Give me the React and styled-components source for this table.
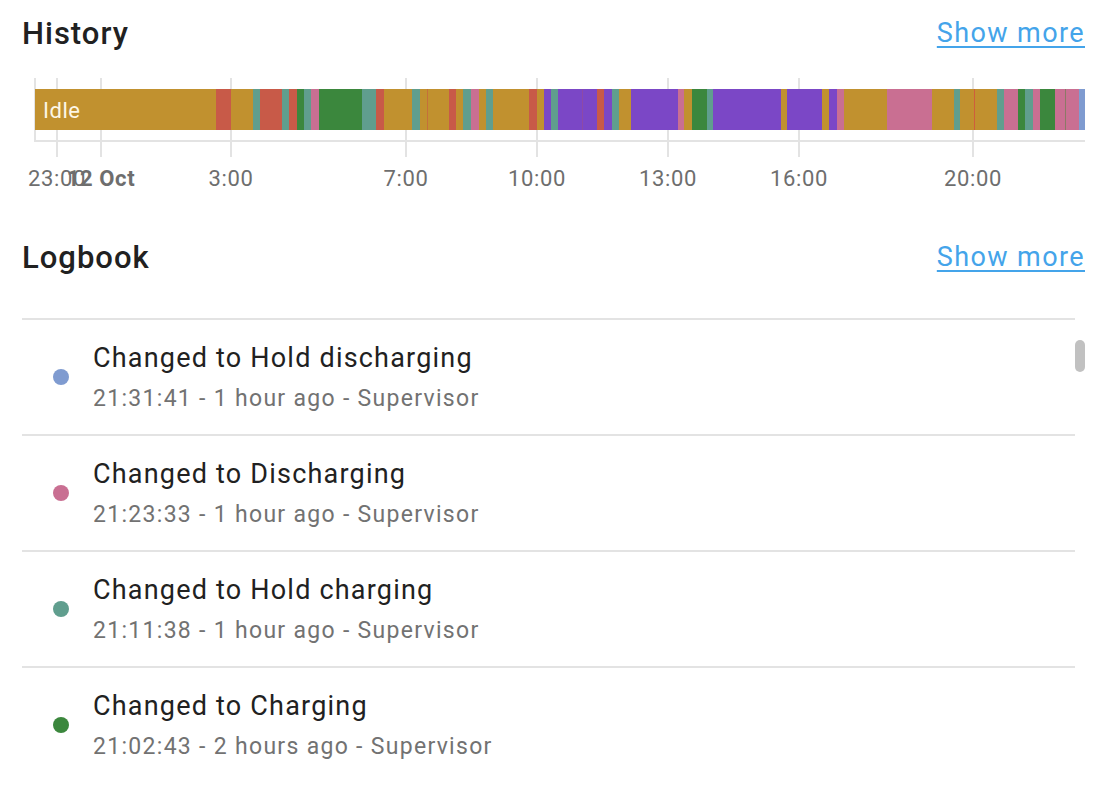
import React from 'react';
import styled, { createGlobalStyle } from 'styled-components';

// paleta dos estados
const colors = {
  gold: '#c1912f',
  red: '#c85a48',
  teal: '#609e8e',
  green: '#3b873d',
  pink: '#c96f92',
  purple: '#7b47c6',
  blue: '#7f9bd0',
  text: '#212121',
  secondary: '#727272',
  divider: '#e3e3e3',
  link: '#44a4ea',
};

const GlobalStyle = createGlobalStyle`
  body {
    margin: 0;
    background: #fff;
    font-family: Roboto, 'Noto Sans', Arial, sans-serif;
    color: ${colors.text};
  }
`;

const Page = styled.div`
  width: 1108px;
  height: 798px;
  overflow: hidden;
  box-sizing: border-box;
  padding: 0 23px 0 22px;
`;

const SectionHeader = styled.div`
  display: flex;
  justify-content: space-between;
  align-items: center;
  height: 66px;
  margin-top: ${(p) => p.$top || 0}px;
`;

const Title = styled.h2`
  margin: 0;
  font-size: 31px;
  font-weight: 500;
  letter-spacing: 1px;
`;

const ShowMore = styled.a`
  font-size: 27px;
  color: ${colors.link};
  text-decoration: underline;
  text-underline-offset: 4px;
  letter-spacing: 1.4px;
  cursor: pointer;
`;

const Chart = styled.svg`
  display: block;
  margin-top: 4px;
`;

const List = styled.div`
  position: relative;
  margin-top: 28px;
  padding-right: 10px;
`;

const Item = styled.div`
  display: flex;
  align-items: center;
  gap: 24px;
  height: 114px;
  padding-left: 31px;
  border-top: 2px solid ${colors.divider};
  &:last-child {
    border-bottom: 2px solid ${colors.divider};
  }
`;

const Dot = styled.span`
  width: 16px;
  height: 16px;
  border-radius: 50%;
  background: ${(p) => p.$color};
  flex: none;
`;

const ItemText = styled.div`
  display: flex;
  flex-direction: column;
  padding-top: 3px;
`;

const ItemTitle = styled.div`
  font-size: 27px;
  line-height: 40px;
  letter-spacing: 1.2px;
  color: ${colors.text};
`;

const ItemMeta = styled.div`
  font-size: 23px;
  line-height: 42px;
  letter-spacing: 1.3px;
  color: ${colors.secondary};
`;

const ScrollThumb = styled.div`
  position: absolute;
  right: 0;
  top: 22px;
  width: 10px;
  height: 32px;
  border-radius: 5px;
  background: #c1c1c1;
`;

const G = colors.gold, R = colors.red, T = colors.teal, N = colors.green;
const P = colors.pink, V = colors.purple, B = colors.blue;

const segments = [
  [35, 216, G], [216, 231, R], [231, 253, G], [253, 260, T], [260, 282, R],
  [282, 289, T], [289, 297, R], [297, 304, N], [304, 311, T], [311, 319, P],
  [319, 362, N], [362, 376, T], [376, 384, R], [384, 412, G], [412, 420, T],
  [420, 449, G], [427, 428, '#c4703a'], [449, 456, R], [456, 463, G], [463, 471, T],
  [471, 479, P], [479, 486, G], [486, 493, T], [493, 529, G], [529, 537, R],
  [537, 544, G], [544, 551, V], [551, 558, T], [558, 597, V], [582, 583, '#8d4aa6'],
  [597, 604, R], [604, 612, V], [612, 619, T], [619, 631, G], [631, 678, V],
  [678, 684, P], [684, 692, G], [692, 707, N], [707, 713, T], [713, 781, V],
  [781, 787, G], [787, 822, V], [822, 829, G], [829, 837, V], [837, 844, P],
  [844, 887, G], [887, 932, P], [932, 954, G], [954, 960, T], [960, 997, G],
  [974, 975, '#cf5e3c'], [997, 1004, T], [1004, 1018, P], [1018, 1025, N],
  [1025, 1033, T], [1033, 1040, P], [1040, 1055, N], [1055, 1079, P],
  [1065, 1066, '#8b7a66'], [1079, 1085, B],
];

const ticks = [
  { x: 57, label: '23:00' },
  { x: 101, label: '12 Oct', bold: true },
  { x: 231, label: '3:00' },
  { x: 406, label: '7:00' },
  { x: 537, label: '10:00' },
  { x: 668, label: '13:00' },
  { x: 799, label: '16:00' },
  { x: 973, label: '20:00' },
];

const entries = [
  { title: 'Changed to Hold discharging', meta: '21:31:41 - 1 hour ago - Supervisor', color: B },
  { title: 'Changed to Discharging', meta: '21:23:33 - 1 hour ago - Supervisor', color: P },
  { title: 'Changed to Hold charging', meta: '21:11:38 - 1 hour ago - Supervisor', color: T },
  { title: 'Changed to Charging', meta: '21:02:43 - 2 hours ago - Supervisor', color: N },
];

function Timeline() {
  return (
    <Chart width="1063" height="130" viewBox="22 70 1063 130">
      <line x1="35" y1="78" x2="35" y2="142" stroke={colors.divider} strokeWidth="2" />
      {ticks.map((t) => (
        <line key={t.x} x1={t.x} y1="78" x2={t.x} y2="157" stroke={colors.divider} strokeWidth="2" />
      ))}
      <line x1="35" y1="141" x2="1085" y2="141" stroke={colors.divider} strokeWidth="2" />
      {segments.map(([a, b, c], i) => (
        <rect key={i} x={a} y="89" width={b - a} height="41" fill={c} />
      ))}
      <text x="43" y="117.5" fill="#fdf6e6" fontSize="22" letterSpacing="0.5" fontFamily="Roboto, sans-serif">Idle</text>
      {ticks.map((t) => (
        <text
          key={t.label}
          x={t.x}
          y="186"
          textAnchor="middle"
          fill="#6e6e6e"
          fontSize="22"
          letterSpacing="0.6"
          fontWeight={t.bold ? 700 : 400}
          fontFamily="Roboto, sans-serif"
        >
          {t.label}
        </text>
      ))}
    </Chart>
  );
}

export default function App() {
  return (
    <>
      <GlobalStyle />
      <Page>
        <SectionHeader>
          <Title>History</Title>
          <ShowMore>Show more</ShowMore>
        </SectionHeader>
        <Timeline />
        <SectionHeader $top={24}>
          <Title>Logbook</Title>
          <ShowMore>Show more</ShowMore>
        </SectionHeader>
        <List>
          {entries.map((e) => (
            <Item key={e.meta}>
              <Dot $color={e.color} />
              <ItemText>
                <ItemTitle>{e.title}</ItemTitle>
                <ItemMeta>{e.meta}</ItemMeta>
              </ItemText>
            </Item>
          ))}
          <ScrollThumb />
        </List>
      </Page>
    </>
  );
}
